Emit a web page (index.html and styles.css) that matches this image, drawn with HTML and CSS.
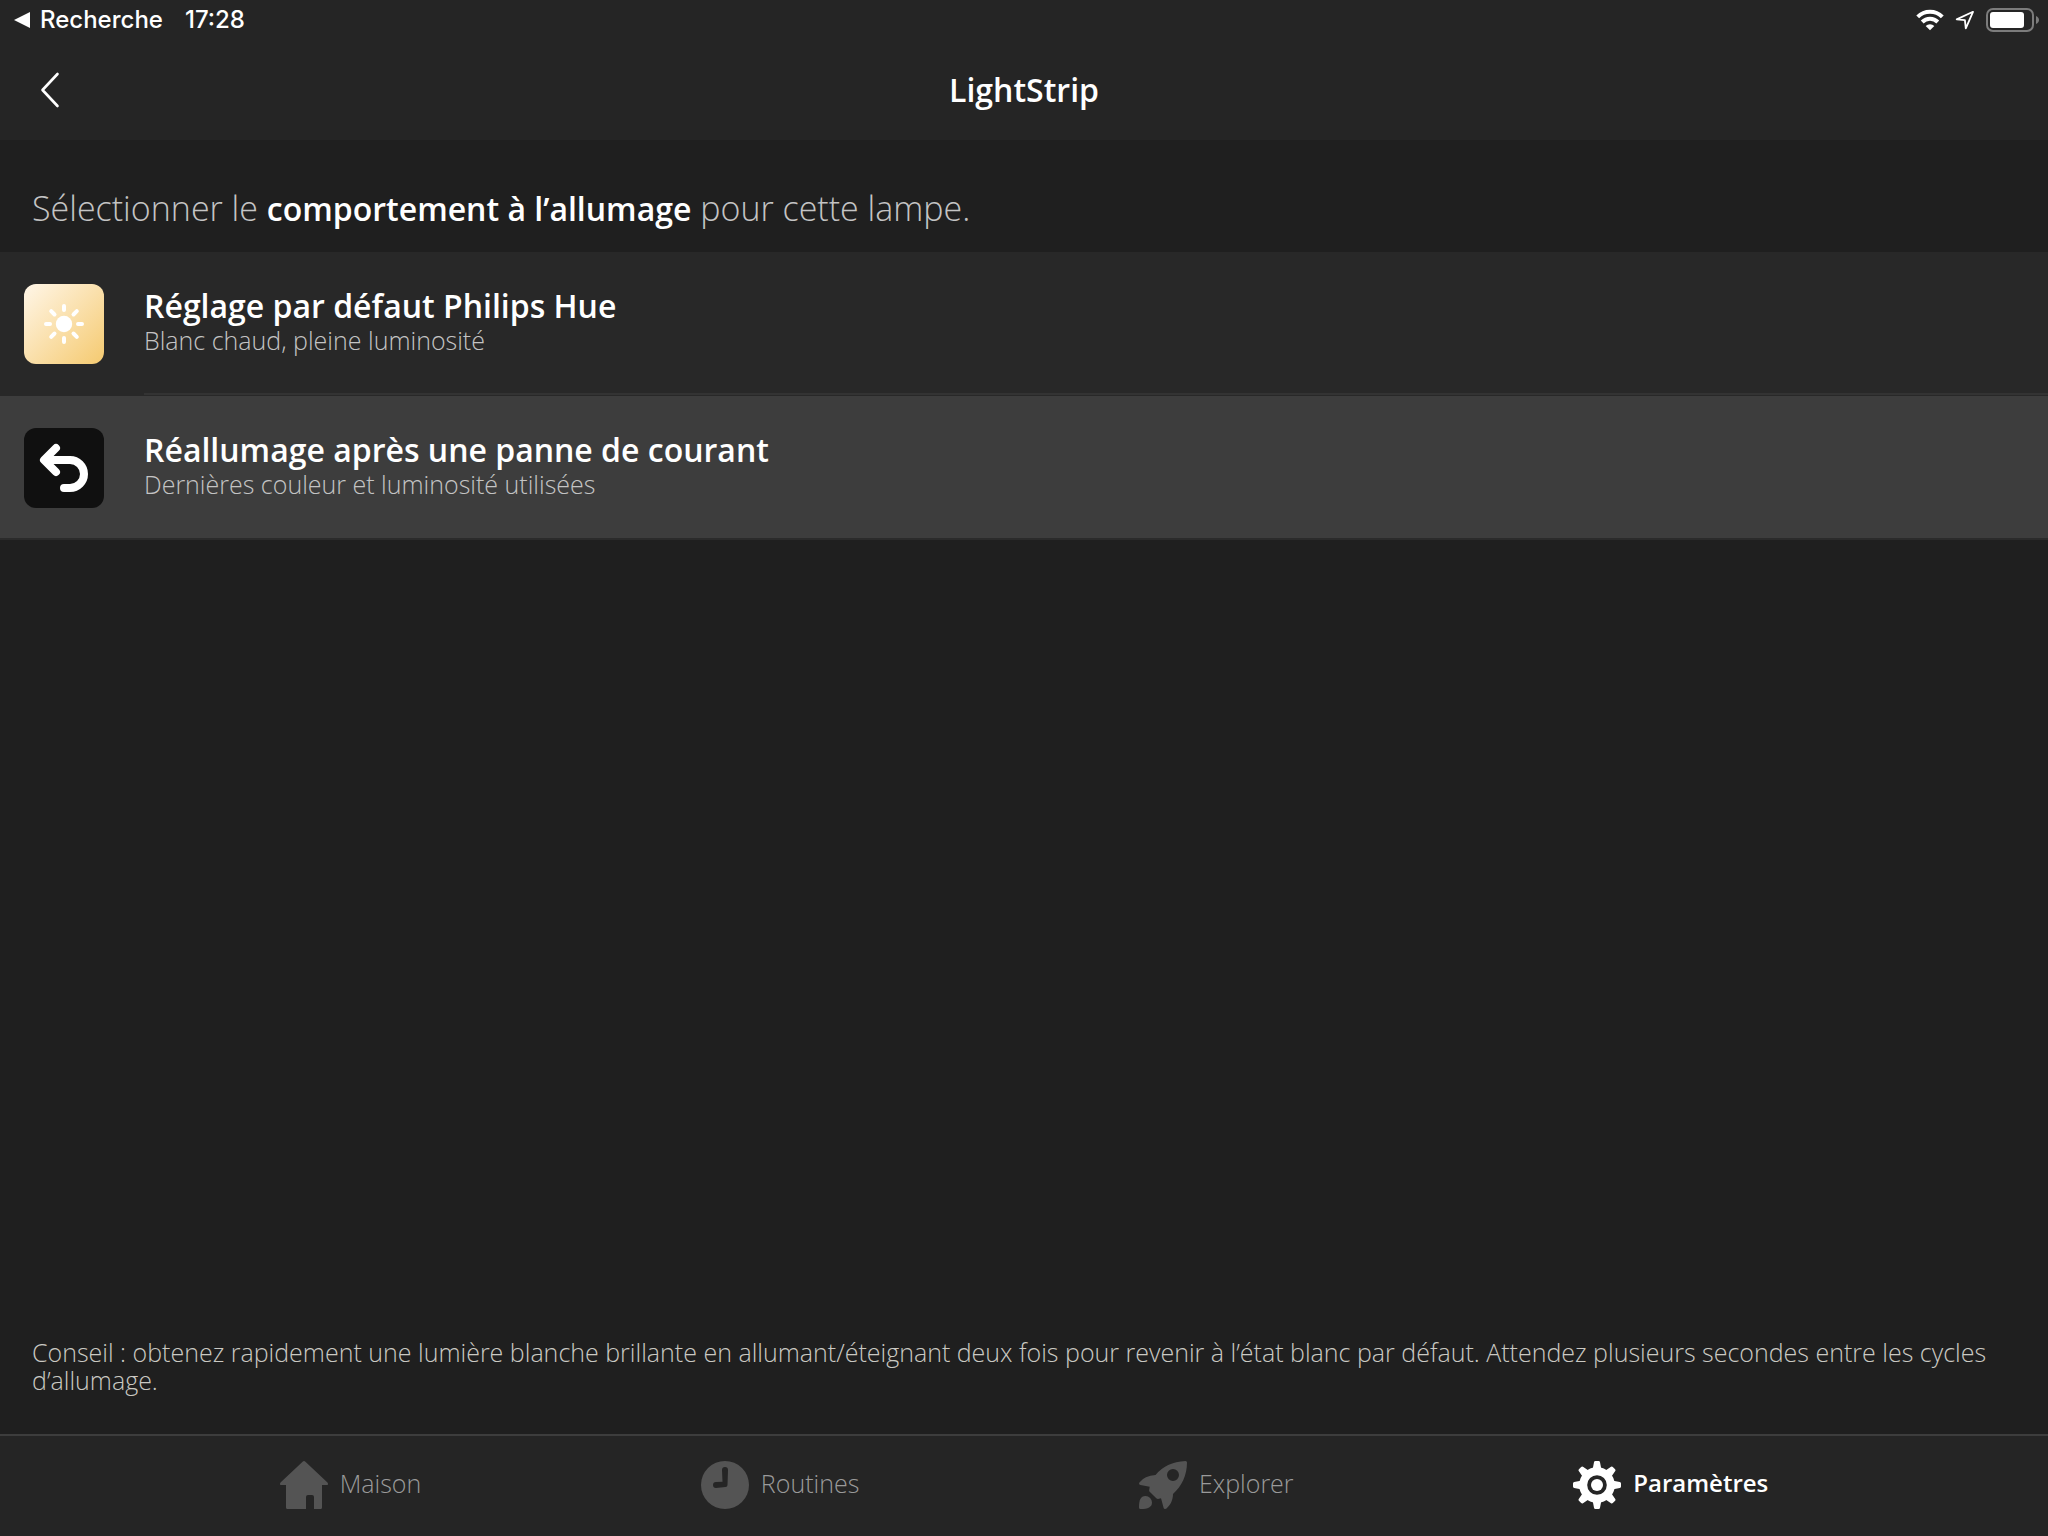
FILE: index.html
```html
<!DOCTYPE html>
<html lang="fr">
<head>
<meta charset="utf-8">
<meta name="viewport" content="width=device-width, initial-scale=1">
<title>LightStrip</title>
<link rel="stylesheet" href="styles.css">
</head>
<body>
<header class="header">
  <div class="status-bar">
    <a class="status-return" href="#">
      <svg width="16" height="16" viewBox="0 0 16 16" fill="currentColor" aria-hidden="true"><path d="M0 8 16 0v16z"/></svg>
      <span>Recherche</span>
    </a>
    <time class="status-time">17:28</time>
    <div class="status-icons">
      <svg width="28" height="22" viewBox="0 0 28 22" aria-hidden="true">
        <g fill="none" stroke="#fff" stroke-width="4">
          <path d="M1.700 7.900a17.500 17.500 0 0 1 24.600 0"/>
          <path d="M6.200 13a11 11 0 0 1 15.600 0"/>
        </g>
        <path d="M14 21.200l-4.300-4.300a6.100 6.100 0 0 1 8.600 0z" fill="#fff"/>
      </svg>
      <svg width="20" height="20" viewBox="0 0 20 20" fill="none" stroke="#fff" stroke-width="1.800" stroke-linejoin="round" aria-hidden="true"><path d="M18 1.800 1.700 9.400l8.200.8.900 8.200z"/></svg>
      <svg width="54" height="24" viewBox="0 0 54 24" aria-hidden="true">
        <rect x="1" y="1" width="46" height="22" rx="6" fill="none" stroke="#7c7c7c" stroke-width="2"/>
        <rect x="4" y="4" width="34" height="16" rx="3" fill="#fff"/>
        <path d="M50 8c4 1.500 4 6.500 0 8z" fill="#7c7c7c"/>
      </svg>
    </div>
  </div>
  <div class="nav-bar">
    <button class="back" type="button" aria-label="Retour">
      <svg width="20" height="36" viewBox="0 0 20 36" fill="none" stroke="currentColor" stroke-width="2.600" stroke-linecap="round" stroke-linejoin="round" aria-hidden="true"><path d="M17.500 2 2.500 18l15 16"/></svg>
    </button>
    <h1 class="title">LightStrip</h1>
  </div>
</header>

<main class="main">
  <p class="intro">Sélectionner le <strong>comportement à l’allumage</strong> pour cette lampe.</p>
  <div class="options">
    <button class="option" type="button">
      <svg class="option-icon" viewBox="0 0 80 80" aria-hidden="true">
        <defs><linearGradient id="warm" x1="0" y1="0" x2="1" y2="1"><stop offset="0" stop-color="#fff6e8"/><stop offset="1" stop-color="#f5ca70"/></linearGradient></defs>
        <rect width="80" height="80" rx="12" fill="url(#warm)"/>
        <circle cx="40" cy="40" r="8.200" fill="#fff"/>
        <path d="M40 22v4M40 54v4M22 40h4M54 40h4M27.200 27.200l3.300 3.300M49.500 49.500l3.300 3.300M52.800 27.200l-3.300 3.300M30.500 49.500l-3.300 3.300" stroke="#fff" stroke-width="4" stroke-linecap="round"/>
      </svg>
      <span class="option-text">
        <span class="option-name">Réglage par défaut Philips Hue</span>
        <span class="option-detail">Blanc chaud, pleine luminosité</span>
      </span>
    </button>
    <button class="option selected" type="button" aria-pressed="true">
      <svg class="option-icon" viewBox="0 0 80 80" aria-hidden="true">
        <rect width="80" height="80" rx="12" fill="#101010"/>
        <path d="M32 20 20 32l12 12M21 32h25a14 14 0 0 1 0 28h-6" fill="none" stroke="#fff" stroke-width="8" stroke-linecap="round" stroke-linejoin="round"/>
      </svg>
      <span class="option-text">
        <span class="option-name">Réallumage après une panne de courant</span>
        <span class="option-detail">Dernières couleur et luminosité utilisées</span>
      </span>
    </button>
  </div>
  <p class="hint">Conseil : obtenez rapidement une lumière blanche brillante en allumant/éteignant deux fois pour revenir à l’état blanc par défaut. Attendez plusieurs secondes entre les cycles d’allumage.</p>
</main>

<nav class="tabs">
  <a class="tab" href="#">
    <svg class="tab-icon" viewBox="0 0 48 48" fill="currentColor" aria-hidden="true"><path d="M22.600.700a2 2 0 0 1 2.800 0L47.200 21.200Q48 22 48 23v.300q0 .700-.700.700H42v22.500q0 1.500-1.500 1.500H34V36q0-2-2-2h-4q-2 0-2 2v12H7.500Q6 48 6 46.500V24H.700Q0 24 0 23.300V23q0-1 .800-1.800z"/></svg>
    <span>Maison</span>
  </a>
  <a class="tab" href="#">
    <svg class="tab-icon" viewBox="0 0 48 48" aria-hidden="true"><circle cx="24" cy="24" r="24" fill="currentColor"/><path d="M21 9a3 3 0 0 1 6 0l-.5 15q-.1 2-2 2L15 27a3 3 0 0 1 0-6l6.500-.200z" fill="#252525"/></svg>
    <span>Routines</span>
  </a>
  <a class="tab" href="#">
    <svg class="tab-icon" viewBox="0 0 48 48" fill="currentColor" fill-rule="evenodd" aria-hidden="true"><path d="M46.500 0Q48 0 48 1.500C48 14 43 25 34 33c0 6-2.500 11-6.500 14.500-1.500 1-2.700.5-3-1L22 37.300l-3 .700q-1 0-1.700-.700l-6.600-6.600q-.700-.700-.5-1.700l.5-3.200L1.500 24Q-.700 23.500.400 21.500 5.500 14.500 16.500 14 27 1 46.500 0zM34 8a6 6 0 1 0 0 12 6 6 0 0 0 0-12z"/><path d="M0 46.500C0 39 1.500 35.200 6.500 35a6.500 6.500 0 0 1 6.500 6.500C13 46.200 9 48 1.500 48Q0 48 0 46.500z"/></svg>
    <span>Explorer</span>
  </a>
  <a class="tab active" href="#" aria-current="page">
    <svg class="tab-icon" viewBox="0 0 48 48" fill="currentColor" aria-hidden="true">
      <defs><path id="cog" d="M19.500 9 21 1.200Q21.200 0 22.400 0h3.200q1.200 0 1.400 1.200L28.500 9z"/></defs>
      <circle cx="24" cy="24" r="13.800" fill="none" stroke="currentColor" stroke-width="8"/>
      <circle cx="24" cy="24" r="6"/>
      <use href="#cog"/><use href="#cog" transform="rotate(45 24 24)"/><use href="#cog" transform="rotate(90 24 24)"/><use href="#cog" transform="rotate(135 24 24)"/><use href="#cog" transform="rotate(180 24 24)"/><use href="#cog" transform="rotate(225 24 24)"/><use href="#cog" transform="rotate(270 24 24)"/><use href="#cog" transform="rotate(315 24 24)"/>
    </svg>
    <span>Paramètres</span>
  </a>
</nav>
</body>
</html>
```
FILE: styles.css
```css
* {
  box-sizing: border-box;
}

body {
  display: flex;
  flex-direction: column;
  min-height: 100vh;
  margin: 0;
  background: #1f1f1f;
  color: #fff;
  font-family: "Open Sans", "Noto Sans", sans-serif;
}

svg {
  display: block;
  flex: none;
}

button {
  border: 0;
  background: none;
  color: inherit;
  font: inherit;
  text-align: left;
}

a {
  color: inherit;
  text-decoration: none;
}

.header {
  background: #252525;
}

.status-bar {
  display: flex;
  align-items: center;
  gap: 22px;
  height: 40px;
  padding: 0 8px 0 14px;
  font: 500 24px/40px Inter, "Liberation Sans", sans-serif;
}

.status-return {
  display: flex;
  align-items: center;
  gap: 10px;
}

.status-icons {
  display: flex;
  align-items: center;
  gap: 11px;
  margin-left: auto;
}

.nav-bar {
  display: grid;
  grid-template-columns: 1fr auto 1fr;
  align-items: center;
  height: 100px;
  padding: 0 32px;
}

.back {
  justify-self: start;
  padding: 0 8px;
}

.title {
  margin: 0;
  font-size: 32px;
  line-height: 40px;
  font-weight: 600;
}

.main {
  display: flex;
  flex: 1;
  flex-direction: column;
}

.intro {
  margin: 0;
  padding: 48px 32px 24px;
  color: #c4c4c4;
  font-size: 34px;
  line-height: 40px;
  font-weight: 300;
}

.intro strong {
  color: #fff;
  font-size: 32px;
  line-height: 32px;
  font-weight: 600;
}

.options {
  border-bottom: 2px solid #2b2b2b;
}

.option {
  position: relative;
  display: flex;
  align-items: flex-start;
  gap: 40px;
  width: 100%;
  padding: 32px 24px;
  background: #282828;
}

.option:first-child::after {
  content: "";
  position: absolute;
  right: 0;
  bottom: 1px;
  left: 144px;
  height: 2px;
  background: #333;
}

.option.selected {
  padding-bottom: 30px;
  background: #3d3d3d;
}

.option-icon {
  width: 80px;
  height: 80px;
}

.option-text {
  display: flex;
  flex-direction: column;
  padding-top: 2px;
}

.option-name {
  font-size: 32px;
  line-height: 40px;
  font-weight: 600;
}

.option-detail {
  color: #c4c4c4;
  font-size: 25px;
  line-height: 28px;
  font-weight: 300;
}

.hint {
  margin: auto 0 0;
  padding: 0 32px 40px;
  color: #cac9c3;
  font-size: 25px;
  line-height: 28px;
  font-weight: 300;
}

.tabs {
  display: flex;
  justify-content: space-evenly;
  height: 102px;
  padding-bottom: 2px;
  border-top: 2px solid #3d3d3d;
  background: #252525;
}

.tab {
  display: flex;
  align-items: center;
  gap: 12px;
  color: #545454;
  font-size: 25px;
  line-height: 32px;
  font-weight: 300;
}

.tab span {
  padding-bottom: 5px;
  color: #9a9a9a;
}

.tab-icon {
  width: 48px;
  height: 48px;
}

.tab.active,
.tab.active span {
  color: #fff;
  font-size: 24px;
  font-weight: 600;
}
```
